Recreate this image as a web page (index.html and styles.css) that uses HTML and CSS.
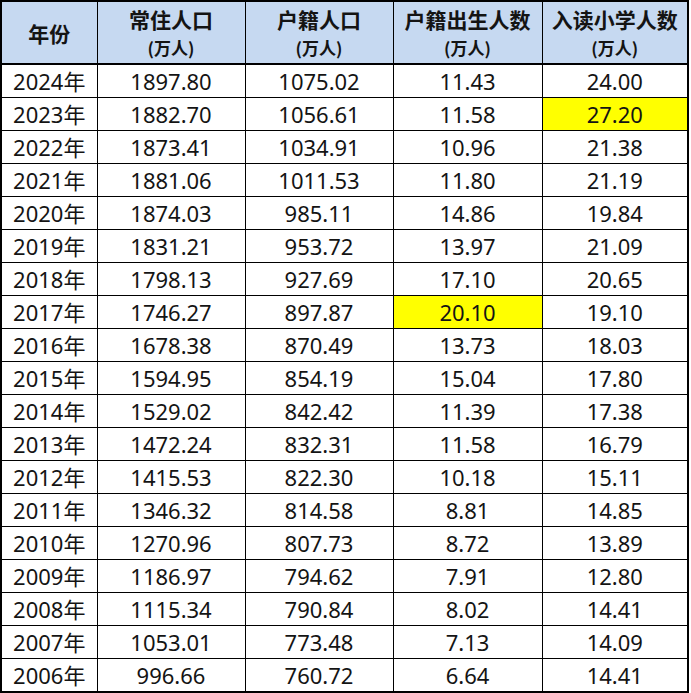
FILE: index.html
```html
<!DOCTYPE html>
<html lang="zh-CN">
<head>
<meta charset="utf-8">
<link rel="stylesheet" href="styles.css">
</head>
<body>
<table class="data">
  <colgroup>
    <col class="c1"><col class="c2"><col class="c3"><col class="c4"><col class="c5">
  </colgroup>
  <thead>
    <tr>
      <th class="h-year"><span class="h-main">年份</span></th>
      <th><span class="h-main">常住人口</span><span class="h-unit">(万人)</span></th>
      <th><span class="h-main">户籍人口</span><span class="h-unit">(万人)</span></th>
      <th><span class="h-main">户籍出生人数</span><span class="h-unit">(万人)</span></th>
      <th><span class="h-main">入读小学人数</span><span class="h-unit">(万人)</span></th>
    </tr>
  </thead>
  <tbody>
    <tr><td>2024年</td><td>1897.80</td><td>1075.02</td><td>11.43</td><td>24.00</td></tr>
    <tr><td>2023年</td><td>1882.70</td><td>1056.61</td><td>11.58</td><td class="hl">27.20</td></tr>
    <tr><td>2022年</td><td>1873.41</td><td>1034.91</td><td>10.96</td><td>21.38</td></tr>
    <tr><td>2021年</td><td>1881.06</td><td>1011.53</td><td>11.80</td><td>21.19</td></tr>
    <tr><td>2020年</td><td>1874.03</td><td>985.11</td><td>14.86</td><td>19.84</td></tr>
    <tr><td>2019年</td><td>1831.21</td><td>953.72</td><td>13.97</td><td>21.09</td></tr>
    <tr><td>2018年</td><td>1798.13</td><td>927.69</td><td>17.10</td><td>20.65</td></tr>
    <tr><td>2017年</td><td>1746.27</td><td>897.87</td><td class="hl">20.10</td><td>19.10</td></tr>
    <tr><td>2016年</td><td>1678.38</td><td>870.49</td><td>13.73</td><td>18.03</td></tr>
    <tr><td>2015年</td><td>1594.95</td><td>854.19</td><td>15.04</td><td>17.80</td></tr>
    <tr><td>2014年</td><td>1529.02</td><td>842.42</td><td>11.39</td><td>17.38</td></tr>
    <tr><td>2013年</td><td>1472.24</td><td>832.31</td><td>11.58</td><td>16.79</td></tr>
    <tr><td>2012年</td><td>1415.53</td><td>822.30</td><td>10.18</td><td>15.11</td></tr>
    <tr><td>2011年</td><td>1346.32</td><td>814.58</td><td>8.81</td><td>14.85</td></tr>
    <tr><td>2010年</td><td>1270.96</td><td>807.73</td><td>8.72</td><td>13.89</td></tr>
    <tr><td>2009年</td><td>1186.97</td><td>794.62</td><td>7.91</td><td>12.80</td></tr>
    <tr><td>2008年</td><td>1115.34</td><td>790.84</td><td>8.02</td><td>14.41</td></tr>
    <tr><td>2007年</td><td>1053.01</td><td>773.48</td><td>7.13</td><td>14.09</td></tr>
    <tr><td>2006年</td><td>996.66</td><td>760.72</td><td>6.64</td><td>14.41</td></tr>
  </tbody>
</table>
</body>
</html>
```
FILE: styles.css
```css
html, body {
  margin: 0;
  padding: 0;
  background: #ffffff;
}

.data {
  border-collapse: collapse;
  table-layout: fixed;
  width: 689px;
  border: 2px solid #000;
  font-family: "Noto Sans", "Noto Sans CJK SC", sans-serif;
  color: #141414;
}

.c1 { width: 96px; }
.c2 { width: 148px; }
.c3 { width: 148px; }
.c4 { width: 149px; }
.c5 { width: 146px; }

.data th {
  background: #c6d9f1;
  height: 58px;
  padding: 3px 0 0 0;
  border: 1px solid #000;
  border-bottom: 2px solid #000;
  font-weight: 700;
  text-align: center;
  vertical-align: top;
}

.data th.h-year {
  vertical-align: middle;
  padding: 0;
}

.h-main {
  display: block;
  font-family: "Noto Sans CJK SC", sans-serif;
  font-size: 21px;
  line-height: 28px;
  font-weight: 700;
  white-space: nowrap;
}

.h-unit {
  display: block;
  font-family: "Noto Sans CJK SC", sans-serif;
  font-size: 17px;
  line-height: 30px;
  font-weight: 700;
}

.data td {
  height: 32px;
  padding: 0;
  border: 1px solid #000;
  text-align: center;
  vertical-align: middle;
  font-size: 22px;
  line-height: 32px;
  white-space: nowrap;
}

.data td.hl {
  background: #ffff00;
}
```
